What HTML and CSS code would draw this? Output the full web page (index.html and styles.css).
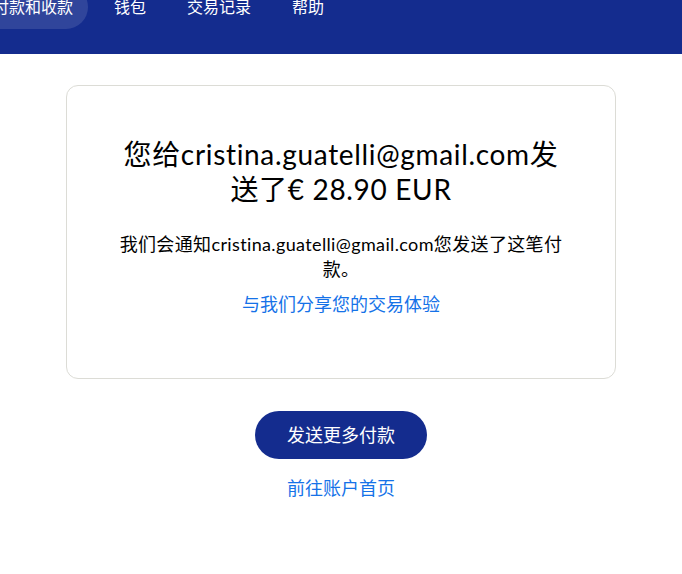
FILE: index.html
```html
<!DOCTYPE html>
<html>
  <head>
    <meta charset="UTF-8">
    <title>付款已发送</title>
    <link rel="stylesheet" href="styles.css">
  </head>
  <body>
    <div class="header">
      <ul class="nav">
        <li class="nav-item nav-active">付款和收款</li>
        <li class="nav-item">钱包</li>
        <li class="nav-item">交易记录</li>
        <li class="nav-item">帮助</li>
      </ul>
    </div>

    <div class="main">
      <div class="card">
        <h1 class="card-title">您给cristina.guatelli@gmail.com发送了€ 28.90 EUR</h1>
        <p class="card-text">我们会通知cristina.guatelli@gmail.com您发送了这笔付款。</p>
        <a class="link" href="#">与我们分享您的交易体验</a>
      </div>
      <a class="btn-primary" href="#">发送更多付款</a>
      <a class="link link-home" href="#">前往账户首页</a>
    </div>
  </body>
</html>
```

FILE: styles.css
```css
html, body {
  margin:0;
  padding:0;
  background-color:#ffffff;
}
body {
  font-family:Lato, "Noto Sans CJK SC", sans-serif;
  color:#000000;
}
.header {
  height:54px;
  background-color:#142c8e;
  overflow:hidden;
}
.nav {
  display:flex;
  gap:11px;
  list-style:none;
  margin:-15px 0 0 -22px;
  padding:0;
}
.nav-item {
  height:44px;
  line-height:44px;
  padding:0 15px;
  border-radius:22px;
  font-size:16px;
  color:#ffffff;
}
.nav-active {
  background-color:rgba(255,255,255,0.12);
}
.main {
  display:flex;
  flex-direction:column;
  align-items:center;
  padding-top:31px;
}
.card {
  box-sizing:border-box;
  width:550px;
  padding:51px 50px 62px;
  border:1px solid #dcdcd6;
  border-radius:12px;
  text-align:center;
}
.card-title {
  margin:0;
  font-size:28px;
  font-weight:normal;
  line-height:35px;
  letter-spacing:0.024em;
}
.card-text {
  margin:25px 0 0;
  font-size:18px;
  line-height:25px;
  letter-spacing:0.02em;
}
.link {
  display:inline-block;
  margin-top:10px;
  font-size:18px;
  line-height:24px;
  color:#1572e8;
  text-decoration:none;
}
.btn-primary {
  display:block;
  margin-top:32px;
  padding:0 32px;
  height:48px;
  line-height:48px;
  border-radius:24px;
  background-color:#142c8e;
  color:#ffffff;
  font-size:18px;
  text-decoration:none;
}
.link-home {
  margin-top:17px;
}
```
